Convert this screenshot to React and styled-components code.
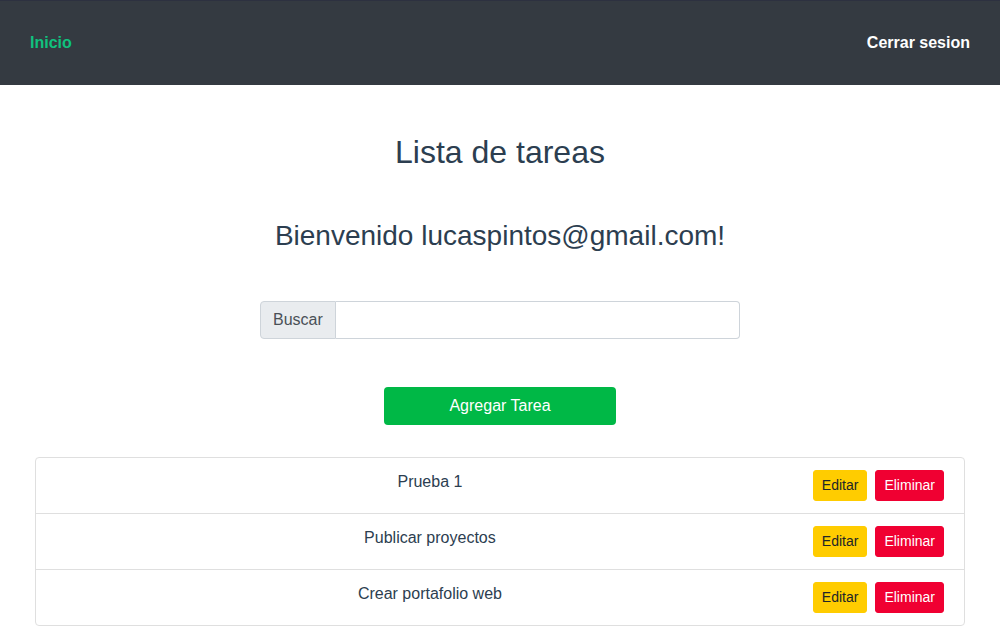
import React from "react";
import styled, { createGlobalStyle } from "styled-components";

const Global = createGlobalStyle`
  * { box-sizing: border-box; }
  body {
    margin: 0;
    font-family: "Liberation Sans", Arial, sans-serif;
    color: #2c3e50;
    background: #ffffff;
  }
`;

const Nav = styled.nav`
  height: 85px;
  background: #343a41;
  border-top: 1px solid #2d3140;
  display: flex;
  align-items: center;
  justify-content: space-between;
  padding: 0 30px;
`;

const NavLink = styled.a`
  font-size: 16px;
  font-weight: 700;
  line-height: 24px;
  text-decoration: none;
  color: ${(p) => (p.$active ? "#10c27e" : "#ffffff")};
  cursor: pointer;
`;

const Main = styled.main`
  display: flex;
  flex-direction: column;
  align-items: center;
  padding: 0 35px;
`;

const Title = styled.h1`
  margin: 48px 0 0;
  font-size: 32px;
  font-weight: 400;
  line-height: 38px;
`;

const Welcome = styled.h2`
  margin: 48px 0 0;
  font-size: 28px;
  font-weight: 400;
  line-height: 34px;
`;

const InputGroup = styled.div`
  margin-top: 48px;
  width: 480px;
  display: flex;
  height: 38px;
`;

const InputLabel = styled.span`
  display: flex;
  align-items: center;
  padding: 0 12px;
  font-size: 16px;
  color: #495057;
  background: #e9ecef;
  border: 1px solid #ced4da;
  border-radius: 4px 0 0 4px;
`;

const Input = styled.input`
  flex: 1;
  min-width: 0;
  border: 1px solid #ced4da;
  border-left: none;
  border-radius: 0 4px 4px 0;
  padding: 6px 12px;
  font-size: 16px;
  font-family: inherit;
  color: #495057;
  outline: none;
`;

const AddButton = styled.button`
  margin-top: 48px;
  width: 232px;
  height: 38px;
  border: none;
  border-radius: 4px;
  background: #00b846;
  color: #ffffff;
  font-family: inherit;
  font-size: 16px;
  cursor: pointer;
`;

const List = styled.ul`
  margin: 32px 0 0;
  padding: 0;
  list-style: none;
  align-self: stretch;
  border: 1px solid #dfdfdf;
  border-radius: 4px;
`;

const Row = styled.li`
  display: flex;
  align-items: flex-start;
  gap: 9px;
  height: 56px;
  padding: 12px 20px 0;
  & + & {
    border-top: 1px solid #dfdfdf;
  }
  &:first-child {
    height: 55px;
  }
`;

const TaskText = styled.span`
  flex: 1;
  text-align: center;
  font-size: 16px;
  line-height: 22px;
  padding-top: 1px;
`;

const Actions = styled.div`
  display: flex;
  gap: 8px;
`;

const ActionButton = styled.button`
  border: 1px solid ${(p) => (p.$danger ? "#f00032" : "#ffcc00")};
  background: ${(p) => (p.$danger ? "#f00032" : "#ffcc00")};
  color: ${(p) => (p.$danger ? "#ffffff" : "#212529")};
  font-family: inherit;
  font-size: 14px;
  line-height: 21px;
  padding: 4px 8px;
  border-radius: 3px;
  cursor: pointer;
`;

const tasks = ["Prueba 1", "Publicar proyectos", "Crear portafolio web"];

export default function App() {
  return (
    <>
      <Global />
      <Nav>
        <NavLink $active>Inicio</NavLink>
        <NavLink>Cerrar sesion</NavLink>
      </Nav>
      <Main>
        <Title>Lista de tareas</Title>
        <Welcome>Bienvenido lucaspintos@gmail.com!</Welcome>
        <InputGroup>
          <InputLabel>Buscar</InputLabel>
          <Input type="text" />
        </InputGroup>
        <AddButton>Agregar Tarea</AddButton>
        <List>
          {tasks.map((t) => (
            <Row key={t}>
              <TaskText>{t}</TaskText>
              <Actions>
                <ActionButton>Editar</ActionButton>
                <ActionButton $danger>Eliminar</ActionButton>
              </Actions>
            </Row>
          ))}
        </List>
      </Main>
    </>
  );
}
